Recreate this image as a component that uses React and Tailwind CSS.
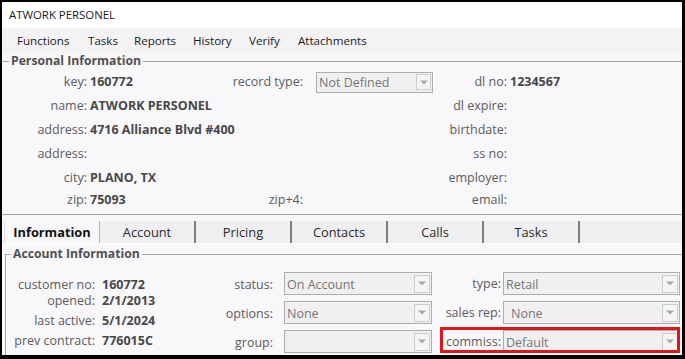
import React from "react";

const Arrow = () => (
  <svg width="8" height="5" viewBox="0 0 8 5">
    <path d="M0 0.5H8L4 4.5Z" fill="#a8a8a8" />
  </svg>
);

function Combo({ text, cls, btn, pad = "pl-[2px]" }) {
  return (
    <div className={`flex items-center border border-[#adadad] bg-[#f0f0f0] ${cls}`}>
      <span className={`flex-1 pt-[2px] text-[12.5px] leading-[16px] text-[#767676] whitespace-nowrap overflow-hidden ${pad}`}>{text}</span>
      <div className={`mr-[1px] border border-[#cdcdcd] bg-[#f4f4f4] flex items-center justify-center ${btn}`}>
        <Arrow />
      </div>
    </div>
  );
}

const L = ({ children, cls = "" }) => (
  <div className={`text-right text-[12.5px] text-[#5c5c5c] whitespace-nowrap ${cls}`}>{children}</div>
);
const V = ({ children }) => (
  <div className="pl-[3px] text-[12.5px] font-bold text-[#484848] whitespace-nowrap">{children}</div>
);

function PRow({ h, a, av, b, bv, c, cv }) {
  return (
    <div className={`grid grid-cols-[85px_130px_86px_137px_67px_1fr] items-center ${h}`}>
      <L>{a}</L>
      <V>{av}</V>
      <L>{b}</L>
      <div>{bv}</div>
      <L>{c}</L>
      <V>{cv}</V>
    </div>
  );
}

const tabs = ["Information", "Account", "Pricing", "Contacts", "Calls", "Tasks"];

export default function App() {
  return (
    <div className="w-[685px] h-[359px] overflow-hidden border-t-2 border-l-2 border-r-[3px] border-b-[4px] border-black bg-[#f8f7fa] flex flex-col font-['Open_Sans',sans-serif]">
      {/* title */}
      <div className="h-[26px] shrink-0 bg-white flex items-center pl-[7px] text-[11.4px] text-[#1a1a1a]">
        ATWORK PERSONEL
      </div>
      {/* menu */}
      <div className="h-[25px] shrink-0 bg-[#f3f2f5] flex items-center pl-[15px] text-[11.6px] text-[#1a1a1a]">
        <span className="w-[71px]">Functions</span>
        <span className="w-[46px]">Tasks</span>
        <span className="w-[59px]">Reports</span>
        <span className="w-[56px]">History</span>
        <span className="w-[49px]">Verify</span>
        <span>Attachments</span>
      </div>
      {/* Personal information */}
      <div className="h-[16px] shrink-0 flex items-center">
        <div className="w-[7px] h-px bg-[#a8a8a8]" />
        <span className="px-[2px] text-[12.2px] font-bold text-[#505050] leading-[16px]">Personal Information</span>
        <div className="flex-1 h-px bg-[#a8a8a8]" />
      </div>
      <div className="shrink-0 flex flex-col pt-[1px]">
        <PRow
          h="h-[24px]"
          a="key:"
          av="160772"
          b="record type:"
          bv={<Combo text="Not Defined" cls="ml-[13px] w-[117px] h-[21px]" btn="w-[15px] h-[16px]" />}
          c="dl no:"
          cv="1234567"
        />
        <PRow h="h-[24px]" a="name:" av="ATWORK PERSONEL" c="dl expire:" />
        <PRow h="h-[24px]" a="address:" av="4716 Alliance Blvd #400" c="birthdate:" />
        <PRow h="h-[24px]" a="address:" c="ss no:" />
        <PRow h="h-[24px]" a="city:" av="PLANO, TX" c="employer:" />
        <PRow h="h-[21px]" a="zip:" av="75093" b="zip+4:" c="email:" />
      </div>
      <div className="h-[3px] shrink-0" />
      <div className="h-px shrink-0 bg-[#a3a3a3]" />
      <div className="h-[6px] shrink-0" />
      {/* tabs */}
      <div className="h-[22px] shrink-0 flex pl-[2px]">
        {tabs.map((t, i) =>
          i === 0 ? (
            <div
              key={t}
              className="w-[96px] flex items-center justify-center pt-[1px] bg-[#f8f7fa] border-l border-l-[#e2e2e2] border-r border-r-[#b9b9b9] text-[12.8px] font-bold text-[#111]"
            >
              {t}
            </div>
          ) : (
            <div
              key={t}
              className="w-[96px] flex items-center justify-center pt-[2px] bg-[#efeef0] border-r-2 border-r-[#7d7d7d] text-[12.8px] text-[#2a2a2a]"
            >
              {t}
            </div>
          )
        )}
        <div className="flex-1 bg-[#efeef0]" />
      </div>
      <div className="h-px shrink-0 bg-white" />
      <div className="h-[2px] shrink-0" />
      {/* Account info group */}
      <div className="flex-1 flex flex-col pl-[3px]">
        <div className="h-[16px] shrink-0 flex items-center">
          <div className="w-[6px] h-[8px] self-end border-l border-t border-[#a8a8a8]" />
          <span className="px-[2px] text-[12.2px] font-bold text-[#505050] leading-[16px]">Account Information</span>
          <div className="flex-1 h-px bg-[#a8a8a8]" />
        </div>
        <div className="flex-1 flex border-l border-[#a8a8a8]">
          {/* left column */}
          <div className="w-[194px] shrink-0 flex flex-col pt-[15px]">
            <div className="h-[16px] flex items-center">
              <L cls="w-[89px]">customer no:</L>
              <div className="pl-[7px] text-[12.5px] font-bold text-[#484848]">160772</div>
            </div>
            <div className="h-[16px] flex items-center">
              <L cls="w-[89px]">opened:</L>
              <div className="pl-[7px] text-[12.5px] font-bold text-[#484848]">2/1/2013</div>
            </div>
            <div className="h-[16px] mt-[4px] flex items-center">
              <L cls="w-[89px]">last active:</L>
              <div className="pl-[7px] text-[12.5px] font-bold text-[#484848]">5/1/2024</div>
            </div>
            <div className="h-[16px] mt-[4px] flex items-center">
              <L cls="w-[89px]">prev contract:</L>
              <div className="pl-[7px] text-[12.5px] font-bold text-[#484848]">776015C</div>
            </div>
          </div>
          {/* middle column */}
          <div className="flex flex-col pt-[10px] gap-[6px]">
            {[
              ["status:", "On Account"],
              ["options:", "None"],
              ["group:", ""],
            ].map(([l, v]) => (
              <div key={l} className="h-[23px] flex items-center">
                <L cls="w-[73px] pt-[3px]">{l}</L>
                <Combo text={v} cls="ml-[11px] w-[148px] h-[23px]" btn="w-[16px] h-[18px]" />
              </div>
            ))}
          </div>
          {/* right column */}
          <div className="flex flex-col pt-[10px] gap-[6px] pl-[8px]">
            <div className="h-[23px] flex items-center">
              <L cls="w-[61px] pt-[1px]">type:</L>
              <Combo text="Retail" cls="ml-[2px] w-[177px] h-[23px]" btn="w-[16px] h-[18px]" />
            </div>
            <div className="h-[23px] flex items-center">
              <L cls="w-[61px] pt-[1px]">sales rep:</L>
              <Combo text="None" pad="pl-[7px]" cls="ml-[2px] w-[177px] h-[23px]" btn="w-[16px] h-[18px]" />
            </div>
            <div className="relative h-[23px] flex items-center">
              <L cls="w-[61px] pt-[1px]">commiss:</L>
              <Combo text="Default" cls="ml-[2px] w-[177px] h-[23px]" btn="w-[16px] h-[18px]" />
              <div className="absolute left-0 right-0 top-[-3px] h-[26px] border-[3px] border-[#e3141c] pointer-events-none" />
            </div>
          </div>
        </div>
      </div>
    </div>
  );
}
